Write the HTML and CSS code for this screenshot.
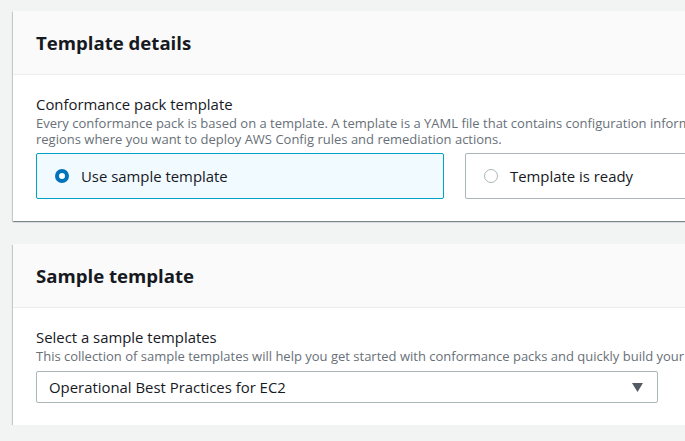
FILE: index.html
```html
<!DOCTYPE html>
<html lang="en">
<head>
<meta charset="utf-8">
<title>Conformance pack</title>
<link rel="stylesheet" href="styles.css">
</head>
<body>
<div class="page">
  <section class="card">
    <header class="card-header"><h2>Template details</h2></header>
    <div class="card-body">
      <div class="label">Conformance pack template</div>
      <div class="desc">Every conformance pack is based on a template. A template is a YAML file that contains configuration information for the rules and<br>regions where you want to deploy AWS Config rules and remediation actions.</div>
      <div class="tiles">
        <div class="tile selected"><span class="radio on"></span><span class="tile-text">Use sample template</span></div>
        <div class="tile"><span class="radio"></span><span class="tile-text">Template is ready</span></div>
      </div>
    </div>
  </section>
  <section class="card">
    <header class="card-header"><h2>Sample template</h2></header>
    <div class="card-body">
      <div class="label">Select a sample templates</div>
      <div class="desc">This collection of sample templates will help you get started with conformance packs and quickly build your own.</div>
      <div class="select">
        <span class="select-text">Operational Best Practices for EC2</span>
        <svg class="caret" width="11" height="9" viewBox="0 0 11 9"><polygon points="0,0 11,0 5.5,9" fill="#545b64"/></svg>
      </div>
    </div>
  </section>
</div>
</body>
</html>
```
FILE: styles.css
```css
html, body {
  margin: 0;
  padding: 0;
  overflow: hidden;
  background: #f2f3f3;
}
body {
  font-family: "Open Sans", "Noto Sans", sans-serif;
  color: #16191f;
}
.page {
  width: 900px;
  padding: 11px 0 0 13px;
  display: flex;
  flex-direction: column;
  gap: 23px;
}
.card {
  width: 884px;
  background: #fff;
  box-shadow: 0 1px 1px 0 rgba(0,28,36,.3), 1px 1px 1px 0 rgba(0,28,36,.15), -1px 1px 1px 0 rgba(0,28,36,.15);
}
.card-header {
  background: #fafafa;
  border-bottom: 1px solid #eaeded;
  height: 64px;
  box-sizing: border-box;
  padding: 0 23px;
  display: flex;
  align-items: center;
}
.card-header h2 {
  margin: 0;
  font-size: 18.6px;
  line-height: 22px;
  font-weight: 700;
}
.card-body {
  padding: 18px 23px 22px;
}
.label {
  font-size: 14.9px;
  line-height: 22px;
}
.desc {
  font-size: 13px;
  line-height: 16px;
  color: #687078;
  white-space: nowrap;
}
.tiles {
  margin-top: 6px;
  display: grid;
  grid-template-columns: 408px 408px;
  column-gap: 21px;
}
.tile {
  height: 46px;
  box-sizing: border-box;
  border: 1px solid #aab7b8;
  border-radius: 2px;
  display: flex;
  align-items: center;
  padding-left: 18px;
  gap: 12px;
  font-size: 14.9px;
}
.tile.selected {
  border-color: #00a1c9;
  background: #f1faff;
}
.radio {
  width: 14px;
  height: 14px;
  box-sizing: border-box;
  border-radius: 50%;
  border: 1.5px solid #aab7b8;
  background: #fff;
}
.radio.on {
  border: 4px solid #0073bb;
}
.select {
  margin-top: 7px;
  width: 622px;
  height: 32px;
  box-sizing: border-box;
  border: 1px solid #aab7b8;
  border-radius: 2px;
  display: flex;
  align-items: center;
  justify-content: space-between;
  padding: 0 14px 0 12px;
  font-size: 14.9px;
}
.caret {
  display: block;
}
```
